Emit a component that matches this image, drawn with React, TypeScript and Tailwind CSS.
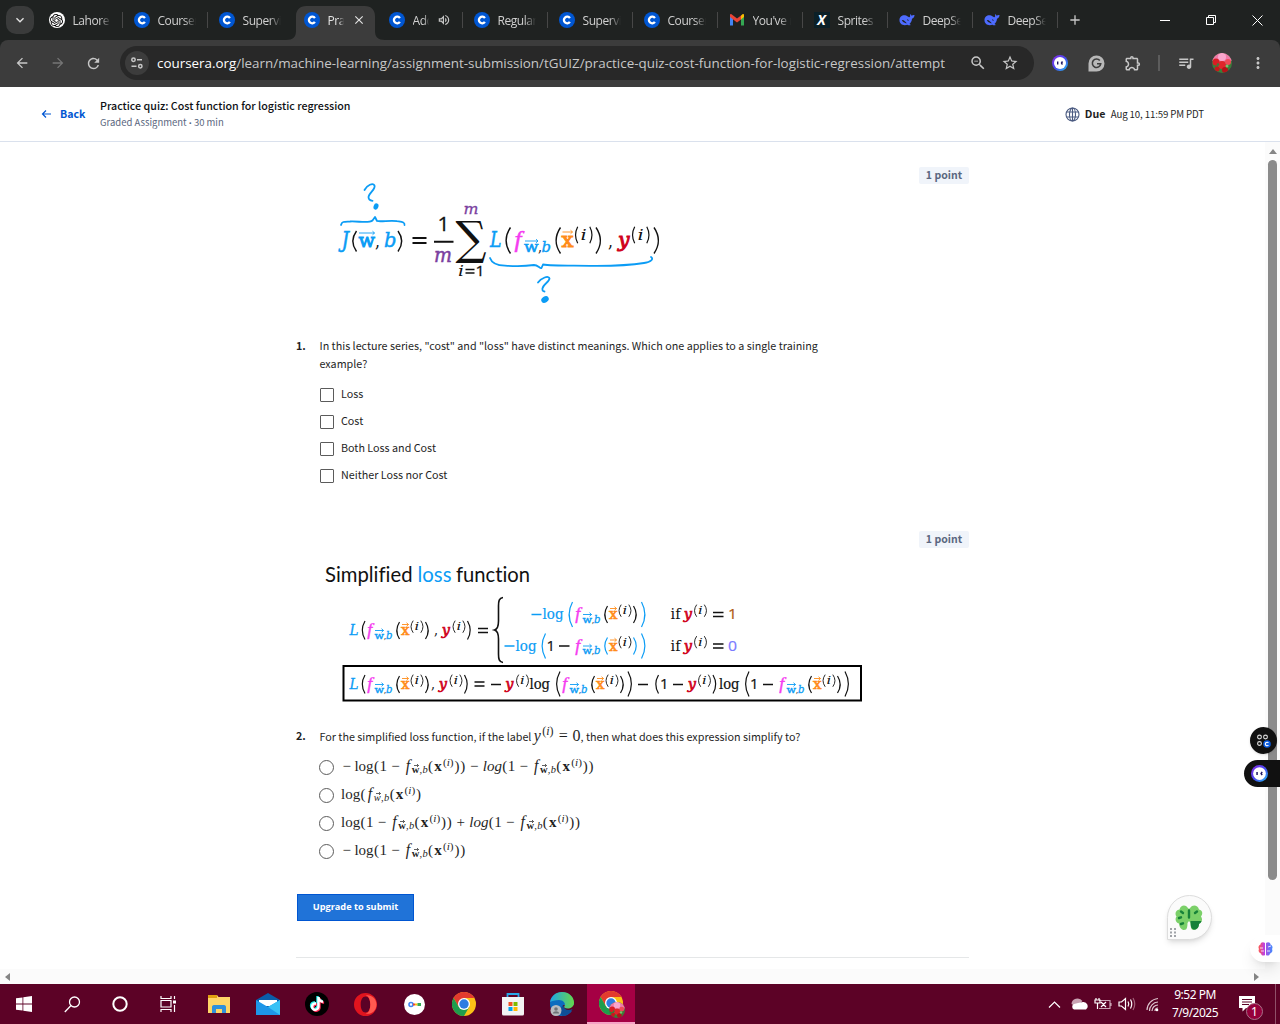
import React from "react";
import { MdArrowBack, MdArrowForward, MdRefresh, MdZoomOut, MdStarBorder, MdOutlineExtension, MdQueueMusic, MdMoreVert, MdKeyboardArrowDown, MdClose, MdAdd, MdOutlineVolumeUp } from "react-icons/md";
import { SiOpenai, SiTiktok } from "react-icons/si";

const BLUE = "#0b9cf5";
const PINK = "#f53cf0";
const ORANGE = "#ff8c1a";
const RED = "#d0021b";
const PURPLE = "#7b3fa0";

/* ---------- formula artwork ---------- */

type TokProps = { t: string; x: number; w: number; y: number; s: number; c?: string; i?: boolean; b?: boolean; sans?: boolean; thin?: boolean; k?: number };

function Tok({ t, x, w, y, s, c = "#111", i, b, sans, thin, k = 0 }: TokProps) {
  return (
    <text x={x} y={y} fontSize={s} fill={c} textLength={w} lengthAdjust="spacingAndGlyphs"
      stroke={k ? c : "none"} strokeWidth={k}
      fontStyle={i ? "italic" : "normal"} fontWeight={b ? 700 : 400}
      fontFamily={sans ? '"Open Sans", sans-serif' : thin ? '"Liberation Serif", serif' : '"DejaVu Serif", serif'}>{t}</text>
  );
}

function Paren({ x, y, h, c = "#111", close, w = 5, k = 1.2 }: { x: number; y: number; h: number; c?: string; close?: boolean; w?: number; k?: number }) {
  const a = close ? x : x + w;
  const m = close ? x + w * 1.35 : x - w * 0.35;
  return <path d={`M${a} ${y}Q${m} ${y + h / 2} ${a} ${y + h}`} fill="none" stroke={c} strokeWidth={k} />;
}

function Vec({ x, w, y, c }: { x: number; w: number; y: number; c: string }) {
  return <path d={`M${x} ${y}h${w}m-2 -1.800l2 1.800l-2 1.800`} fill="none" stroke={c} strokeWidth="0.9" />;
}

function SupI({ x, y, w = 14, s = 11 }: { x: number; y: number; w?: number; s?: number }) {
  return (
    <g>
      <Paren x={x} y={y - s * 0.85} h={s * 1.1} w={3.2} k={s > 12 ? 1.2 : 0.9} />
      <Tok t="i" x={x + w * 0.32} w={w * 0.34} y={y} s={s} i />
      <Paren x={x + w - 3.2} y={y - s * 0.85} h={s * 1.1} w={3.2} k={s > 12 ? 1.2 : 0.9} close />
    </g>
  );
}

function Fx({ x, y, pc }: { x: number; y: number; pc?: string }) {
  return (
    <g>
      <Tok t="f" x={x + 1.8} w={5} y={y} s={17} c={PINK} i thin k={0.4} />
      <Vec x={x + 9.5} w={8.5} y={y - 4.5} c={BLUE} />
      <Tok t="w" x={x + 9} w={9.5} y={y + 3.5} s={10} c={BLUE} k={0.4} />
      <Tok t="," x={x + 18.3} w={2.5} y={y + 3.5} s={10} />
      <Tok t="b" x={x + 20.5} w={6.5} y={y + 3.5} s={11} c={BLUE} i k={0.3} />
      <Paren x={x + 30} y={y - 13} h={17} c={pc} w={4} />
      <Vec x={x + 36.5} w={6.5} y={y - 10.5} c={ORANGE} />
      <Tok t="x" x={x + 35.5} w={8.5} y={y} s={14} c={ORANGE} k={0.6} />
      <SupI x={x + 44.5} y={y - 5} />
      <Paren x={x + 60} y={y - 13} h={17} c={pc} w={4} close />
    </g>
  );
}

function CostArt() {
  return (
    <svg className="block" width="360" height="150" viewBox="320 165 360 150">
      <g fill="none" stroke={BLUE} strokeWidth="1.8" strokeLinecap="round" strokeLinejoin="round">
        <path d="M364.500 190C367 185 373 182.500 374.500 185.500C376 189 369 193 368.500 197C368.500 199 370 200.500 372.500 200.800" />
        <path d="M341 225C342 221 345 221.700 350 221.500C358 221 369 223.500 372.500 220.500L375 217L377 221C381 222 391 220 397 221.200C402 222 405 222 404.500 225" />
        <path d="M490 258C492 264 498 265.500 505 265.600C517 266.500 527 266 534 265C538 265 540 269 541.500 268L543 264.500C552 266 570 265.500 590 265.800C612 266 632 265 644 263C651 262 654 259 651 257" />
        <path d="M538 282.500C541 278 549 275 549.500 278.500C549.500 282 543 284 542.500 288.500C542 291 543.500 291.500 544.500 291.500" />
      </g>
      <ellipse cx="376" cy="206.500" rx="2.400" ry="3.200" fill={BLUE} transform="rotate(20 376 206.500)" />
      <ellipse cx="545" cy="299.500" rx="4" ry="3" fill={BLUE} transform="rotate(-35 545 299.500)" />
      <Tok t="J" x={341.5} w={7.5} y={247} s={22} c={BLUE} i k={0.5} />
      <Paren x={351} y={231} h={20.5} w={5.5} k={1.4} />
      <Vec x={359} w={15.5} y={233} c={BLUE} />
      <Tok t="w" x={358.5} w={16.5} y={247} s={18.5} c={BLUE} k={0.9} />
      <Tok t="," x={375} w={5} y={247} s={18} />
      <Tok t="b" x={384} w={12.5} y={247} s={21} c={BLUE} i k={0.5} />
      <Paren x={398} y={231} h={20.5} w={5.5} close k={1.4} />
      <path d="M412.500 238h14M412.500 243h14M434 241.700h19.500" stroke="#111" strokeWidth="1.900" />
      <Tok t="1" x={437.5} w={12} y={231} s={20} sans k={0.3} />
      <Tok t="m" x={434} w={18} y={262} s={20} c={PURPLE} i k={0.5} />
      <Tok t="m" x={463.5} w={15} y={214} s={15} c={PURPLE} i k={0.3} />
      <Tok t="∑" x={455.5} w={31} y={253.5} s={46} />
      <Tok t="i" x={458} w={6} y={276} s={15} i />
      <path d="M465.500 269.500h9M465.500 273h9" stroke="#111" strokeWidth="1.400" />
      <Tok t="1" x={475.500} w={9} y={276} s={15} sans k={0.3} />
      <Tok t="L" x={490} w={11.5} y={247} s={21.5} c={BLUE} i k={0.5} />
      <Paren x={504} y={227.5} h={26} w={6.5} k={1.4} />
      <Tok t="f" x={514.500} w={7} y={247} s={24} c={PINK} i thin k={0.5} />
      <Vec x={525} w={13} y={241} c={BLUE} />
      <Tok t="w" x={524} w={14.5} y={251.5} s={14.5} c={BLUE} k={0.6} />
      <Tok t="," x={538} w={4} y={251.5} s={14} />
      <Tok t="b" x={541.500} w={9.5} y={251.5} s={15} c={BLUE} i k={0.4} />
      <Paren x={554} y={227.5} h={26} w={6.5} k={1.4} />
      <Vec x={562.5} w={10} y={232} c={ORANGE} />
      <Tok t="x" x={561.500} w={12} y={247} s={20} c={ORANGE} k={1} />
      <SupI x={574.5} y={239.5} w={18.5} s={15} />
      <Paren x={596} y={227.5} h={26} w={6.5} close k={1.4} />
      <Tok t="," x={608} w={5} y={247} s={19} />
      <Tok t="y" x={618} w={11.5} y={247} s={20} c={RED} i k={1} />
      <SupI x={631.5} y={239.5} w={18.5} s={15} />
      <Paren x={654} y={227.5} h={26} w={6.5} close k={1.4} />
    </svg>
  );
}

const RedY = ({ x, y }: { x: number; y: number }) => <Tok t="y" x={x + 0.8} w={8.2} y={y} s={14} c={RED} i k={0.7} />;

function LossHead({ y, tight }: { y: number; tight?: boolean }) {
  const d = tight ? -3 : 0;
  return (
    <g>
      <Tok t="L" x={349.5} w={9} y={y} s={15.5} c={BLUE} i k={0.3} />
      <Paren x={361} y={y - 14} h={18.5} w={4} />
      <Fx x={365.5} y={y} />
      <Tok t="," x={434 + d} w={4} y={y} s={14} />
      <RedY x={441 + d} y={y} />
      <SupI x={452 + d} y={y - 5} />
      <Paren x={467.5 + d} y={y - 14} h={18.5} w={4} close />
    </g>
  );
}

function LossArt() {
  return (
    <svg className="block" width="560" height="146" viewBox="320 560 560 146">
      <g fontFamily="Lato, sans-serif" fontSize="20.500" fill="#111" className="[font-variant-ligatures:none]">
        <text x="325" y="582" textLength="87.500" lengthAdjust="spacingAndGlyphs">Simplified</text>
        <text x="417.500" y="582" textLength="34" lengthAdjust="spacingAndGlyphs" fill={BLUE}>loss</text>
        <text x="456" y="582" textLength="74" lengthAdjust="spacingAndGlyphs">function</text>
      </g>
      <LossHead y={635} />
      <path d="M478 628.500h10M478 632.500h10M713 612.500h10.500M713 616.500h10.500M713 644h10.500M713 648h10.500M559 646h10.500M474.500 682h10M474.500 686h10M491 684.500h10M638 684.500h10M673 684.500h10M763 684.500h10" stroke="#111" strokeWidth="1.300" />
      <path d="M503 597.500C499 598 498.500 601 498.500 606V621C498.500 626 498 629 494.500 630C498 631 498.500 634 498.500 639V654C498.500 659 499 662 503 662.500" fill="none" stroke="#111" strokeWidth="1.600" />
      <path d="M531.500 614.500h10M504.500 646h10" stroke={BLUE} strokeWidth="1.400" />
      <Tok t="log" x={542.5} w={21} y={619} s={14.5} c={BLUE} k={0.2} />
      <Paren x={567.5} y={602} h={25} c={BLUE} />
      <Fx x={573.5} y={619} />
      <Paren x={641.5} y={602} h={25} c={BLUE} close />
      <Tok t="log" x={515.5} w={21} y={650.5} s={14.5} c={BLUE} k={0.2} />
      <Paren x={540.5} y={633.5} h={25} c={BLUE} />
      <Tok t="1" x={546.5} w={8.5} y={650.5} s={14.5} sans k={0.2} />
      <Fx x={573.5} y={650.5} pc={BLUE} />
      <Paren x={641.5} y={633.5} h={25} c={BLUE} close />
      {[619, 650.5].map((y, n) => (
        <g key={y}>
          <Tok t="if" x={670.5} w={10} y={y} s={14.5} />
          <RedY x={683} y={y} />
          <SupI x={693.5} y={y - 5} />
          <Tok t={n ? "0" : "1"} x={728} w={9} y={y} s={14.5} c={n ? "#7b7bff" : "#b05a14"} sans k={0.2} />
        </g>
      ))}
      <rect x="343.500" y="666" width="517.500" height="34.500" fill="none" stroke="#000" strokeWidth="2" />
      <LossHead y={689} tight />
      <RedY x={504.5} y={689} />
      <SupI x={515.5} y={684} />
      <Tok t="log" x={529.5} w={20.5} y={689} s={14.5} k={0.2} />
      <Paren x={555} y={671.5} h={25} />
      <Fx x={560.5} y={689} />
      <Paren x={628} y={671.5} h={25} close />
      <Paren x={654.5} y={675} h={18.5} w={4} />
      <Tok t="1" x={660} w={8.5} y={689} s={14.5} sans k={0.2} />
      <RedY x={687} y={689} />
      <SupI x={697.5} y={684} />
      <Paren x={713} y={675} h={18.5} w={4} close />
      <Tok t="log" x={719} w={20.5} y={689} s={14.5} k={0.2} />
      <Paren x={744} y={671.5} h={25} />
      <Tok t="1" x={750} w={8.5} y={689} s={14.5} sans k={0.2} />
      <Fx x={777.5} y={689} />
      <Paren x={845} y={671.5} h={25} close />
    </svg>
  );
}

/* ---------- typeset maths in the answers ---------- */

const P = ({ c }: { c: string }) => <span className="inline-block w-[0.389em] text-center">{c}</span>;
const Op = ({ c, lead }: { c: string; lead?: boolean }) => (
  <span className={lead ? "mr-[0.12em] inline-block w-[0.778em] text-center" : "mx-[0.18em] inline-block w-[0.778em] text-center"}>{c}</span>
);
const Sup = () => (
  <span className="relative -top-[0.48em] inline-block w-[1.02em] text-center text-[0.75em] leading-none">(<i>i</i>)</span>
);

function FMath({ thin }: { thin?: boolean }) {
  return (
    <>
      <i className="inline-block w-[0.49em] text-center text-[1.05em]">f</i>
      <span className="relative top-[0.22em] inline-flex text-[0.7em] leading-none">
        <span className={thin ? "relative w-[0.7em] italic" : "relative w-[0.74em] font-bold"}>
          w
          <svg className="absolute -top-px left-[2px]" width="5" height="3" viewBox="0 0 5 3"><path d="M0 1.500h4.500M3 0l1.500 1.500L3 3" stroke="#1f1f1f" strokeWidth=".7" fill="none" /></svg>
        </span>
        <span className="w-[0.28em]">,</span><i>b</i>
      </span>
      <P c="(" /><b className="inline-block w-[0.607em] text-center">x</b>
      <Sup /><P c=")" />
    </>
  );
}
const OneMinus = () => (<><P c="(" /><span>1</span><Op c="−" /></>);

function MathLine({ children }: { children: React.ReactNode }) {
  return (
    <label className="flex h-7 items-center">
      <span className="size-[15px] shrink-0 rounded-full border-[1.5px] border-[#5b5b5b]" />
      <span className="mb-0.5 ml-[7px] whitespace-nowrap font-['Liberation_Serif',serif] text-[15px] leading-[26px] text-[#1f1f1f]">{children}</span>
    </label>
  );
}

/* ---------- browser chrome ---------- */

const CourseraIcon = () => (
  <svg width="16" height="16" viewBox="0 0 16 16">
    <circle cx="8" cy="8" r="8" fill="#0056d2" />
    <path d="M10.900 6.100A3.300 3.300 0 1 0 10.900 9.900" fill="none" stroke="#fff" strokeWidth="2.300" />
  </svg>
);
const OpenAiIcon = () => <span className="flex size-4 items-center justify-center rounded-full bg-white text-[13px] text-black"><SiOpenai /></span>;
const GmailIcon = () => (
  <svg width="16" height="16" viewBox="0 0 16 16">
    <path d="M1 4v9.500h3V6.500z" fill="#4285f4" /><path d="M15 4v9.500h-3V6.500z" fill="#34a853" />
    <path d="M12 3.500l1.500-1.200c.8-.5 1.500 0 1.500 1V5l-3 2.500z" fill="#fbbc04" />
    <path d="M1 5V3.300c0-1 .7-1.500 1.500-1L8 6.500l4-3V7.500L8 10.500z" fill="#ea4335" />
  </svg>
);
const XIcon = () => <span className="flex size-4 items-center justify-center bg-[#0b2027] font-['Open_Sans',sans-serif] text-[14px] leading-none font-bold text-white italic">X</span>;
const WhaleIcon = () => (
  <svg width="17" height="16" viewBox="0 0 17 16">
    <path d="M.5 8C.5 4.500 3.500 2.500 6.500 3c1.500.2 2.500 1 3.800 1.800C11 5.300 12 5 11.800 3.500c-.1-1 0-1.500.3-1.500.6.200.8 1.100 1.300 1.400.9-.2 1.700-.9 3.100-.6-.2 2.200-1.200 3.600-2.700 3.900-.2 2.500-1.200 4.300-2.700 5.600.8.500 1.300.6 1.300.9-1 .7-2.500.3-3.400-.2C4.500 14.500.5 12.500.5 8z" fill="#4d6bfe" />
    <path d="M3 8c2.500-.2 4 2 5.300 3.500-2 0-2.700-1.400-3.500-1.100C4 9.800 3.300 9 3 8zM8.500 7.200c1-.2 1.600.8 1.900 1.700-.9.200-1.600-.7-1.900-1.700z" fill="#1f2221" />
  </svg>
);

const tabs: { icon: React.ReactNode; title: string; kind?: "active" | "audio"; sep?: boolean }[] = [
  { icon: <OpenAiIcon />, title: "Lahore", sep: true },
  { icon: <CourseraIcon />, title: "Courser", sep: true },
  { icon: <CourseraIcon />, title: "Supervis" },
  { icon: <CourseraIcon />, title: "Prac", kind: "active" },
  { icon: <CourseraIcon />, title: "Add", kind: "audio", sep: true },
  { icon: <CourseraIcon />, title: "Regular", sep: true },
  { icon: <CourseraIcon />, title: "Supervis", sep: true },
  { icon: <CourseraIcon />, title: "Courser", sep: true },
  { icon: <GmailIcon />, title: "You've r", sep: true },
  { icon: <XIcon />, title: "Sprites", sep: true },
  { icon: <WhaleIcon />, title: "DeepSee", sep: true },
  { icon: <WhaleIcon />, title: "DeepSee", sep: true },
];

function Tab({ icon, title, kind, sep }: (typeof tabs)[number]) {
  const active = kind === "active";
  return (
    <div className="relative flex h-10 w-[85px] shrink-0 items-center pl-[10.5px]">
      {active && (
        <svg className="absolute top-1.5 left-[-7px]" width="99" height="34" viewBox="0 0 99 34">
          <path d="M0 34C7 34 10 31 10 25V10C10 4 14 0 20 0H79C85 0 89 4 89 10V25C89 31 92 34 99 34z" fill="#3c3c3c" />
        </svg>
      )}
      <span className="relative flex w-4 shrink-0">{icon}</span>
      <span className={"relative mt-px ml-[8px] overflow-hidden whitespace-nowrap text-[12px] tracking-[-0.45px] [mask-image:linear-gradient(to_right,black_70%,transparent)] " + (kind ? "w-[16px] " : "w-[38px] ") + (active ? "text-[#e3e3e3]" : "text-[#d0d0d0]")}>{title}</span>
      {active && <MdClose className="relative ml-[8px] text-[14px] text-[#e3e3e3]" />}
      {kind === "audio" && <MdOutlineVolumeUp className="relative ml-[8px] text-[14px] text-[#c7c7c7]" />}
      {sep && <span className="absolute right-0 h-4 w-[1.5px] bg-[#474747]" />}
    </div>
  );
}

const Rose = ({ s }: { s: number }) => (
  <svg width={s} height={s} viewBox="0 0 20 20">
    <clipPath id="rose"><circle cx="10" cy="10" r="10" /></clipPath>
    <g clipPath="url(#rose)">
      <rect width="20" height="20" fill="#3b7d3a" />
      <path d="M0 0h20v8L10 9 0 8z" fill="#f07aa8" /><circle cx="10" cy="4" r="4" fill="#f9a6cc" />
      <circle cx="4" cy="9" r="3.500" fill="#d81e24" /><circle cx="10" cy="12" r="4" fill="#e0262b" />
      <circle cx="16" cy="9" r="3" fill="#f04a58" /><circle cx="13" cy="17" r="3" fill="#b51218" /><circle cx="5" cy="16" r="2.500" fill="#c8171c" />
      <circle cx="15" cy="13" r="1.500" fill="#79c46a" /><circle cx="6" cy="11.500" r="1.200" fill="#3b7d3a" />
    </g>
  </svg>
);

const Bot = ({ s }: { s: number }) => (
  <svg width={s} height={s} viewBox="0 0 16 16">
    <defs><linearGradient id="bot" x1="0" y1="0" x2="1" y2="1"><stop stopColor="#8a2be2" /><stop offset=".5" stopColor="#4a48f0" /><stop offset="1" stopColor="#20c4f4" /></linearGradient></defs>
    <circle cx="8" cy="8" r="8" fill="url(#bot)" /><circle cx="8" cy="8" r="6" fill="#fff" />
    <path d="M5.700 6.500v3M10.500 6.500L9.500 8l1 1.500" stroke="#1b1464" strokeWidth="1.400" fill="none" />
  </svg>
);

function BrowserTop() {
  return (
    <header className="bg-[#1f2221] font-['Open_Sans',sans-serif]">
      <div className="flex h-10 items-center">
        <span className="ml-1.5 flex size-7 items-center justify-center rounded-[10px] bg-[#3a3b3b] text-[16px] text-[#e3e3e3]"><MdKeyboardArrowDown /></span>
        <div className="ml-1 flex">{tabs.map((t, i) => <Tab key={i} {...t} />)}</div>
        <MdAdd className="ml-[9px] text-[16px] text-[#c7c7c7]" />
        <svg className="ml-auto" width="120" height="40" viewBox="1160 0 120 40" fill="none" stroke="#fff" strokeWidth="1">
          <path d="M1160 20.500h10M1206.500 17.500h7v7h-7zM1208.500 17.500v-2h7v7h-2M1252.500 15.500l10 10M1262.500 15.500l-10 10" />
        </svg>
      </div>
      <div className="flex h-[47px] items-center rounded-t-lg bg-[#3c3c3c] pb-px text-[#c7c7c7]">
        <MdArrowBack className="ml-[14px] text-[16px]" />
        <MdArrowForward className="ml-5 text-[16px] text-[#757575]" />
        <MdRefresh className="ml-[19px] text-[17px]" />
        <div className="ml-[18px] flex h-[34px] w-[914px] items-center rounded-full bg-[#282828]">
          <span className="ml-[5px] flex size-6 items-center justify-center rounded-full bg-[#3c3c3c]">
            <svg width="14" height="14" viewBox="0 0 14 14" fill="none" stroke="#c7c7c7" strokeWidth="1.500"><circle cx="3.500" cy="3.800" r="1.700" /><path d="M7 3.800h5M1.500 10.200h5" /><circle cx="10.300" cy="10.200" r="1.700" /></svg>
          </span>
          <span className="ml-2 w-[790px] whitespace-nowrap text-[13.4px] text-[#c7c7c7]"><span className="text-white">coursera.org</span>/learn/machine-learning/assignment-submission/tGUIZ/practice-quiz-cost-function-for-logistic-regression/attempt</span>
          <MdZoomOut className="ml-[22px] shrink-0 text-[18px]" />
          <MdStarBorder className="ml-[14px] shrink-0 text-[18px]" />
        </div>
        <span className="ml-[18px]"><Bot s={16} /></span>
        <svg className="ml-[20px]" width="17" height="17" viewBox="0 0 17 17"><path d="M8.500 .5a8 8 0 0 1 0 16H.5v-8a8 8 0 0 1 8-8z" fill="#b8b8b8" /><path d="M11.800 5.600A4.200 4.200 0 1 0 12.700 8.800H9" fill="none" stroke="#3c3c3c" strokeWidth="1.600" /></svg>
        <MdOutlineExtension className="ml-[19px] text-[18px]" />
        <span className="ml-[16px] h-4 w-[1.5px] bg-[#5c5c5c]" />
        <MdQueueMusic className="ml-[17px] text-[18px]" />
        <span className="ml-[17px]"><Rose s={20} /></span>
        <MdMoreVert className="ml-[17px] text-[18px]" />
      </div>
    </header>
  );
}

/* ---------- quiz page ---------- */

const PointBadge = () => <div className="ml-auto flex h-[17px] w-[50px] items-center justify-center rounded-[2px] bg-[#f0f4fa] pb-px text-[10.5px] font-bold text-[#5b6780]">1 point</div>;

function QuizHeader() {
  return (
    <div className="flex h-[55px] shrink-0 items-center border-b border-[#dae1ed] bg-white">
      <svg className="ml-[41px]" width="11" height="10" viewBox="0 0 11 10" fill="none" stroke="#0056d2" strokeWidth="1.200"><path d="M10 5H1.500M5 1.500L1.500 5 5 8.500" /></svg>
      <span className="ml-2 w-10 pb-px text-[10.6px] font-bold text-[#0056d2]">Back</span>
      <div className="pb-px leading-[15px]">
        <div className="text-[10.7px] font-medium text-[#0f1114]">Practice quiz: Cost function for logistic regression</div>
        <div className="pt-0.5 text-[9.5px] leading-[14px] text-[#5b6780]">Graded Assignment <span className="font-['Open_Sans',sans-serif] text-[8px]">•</span> 30 min</div>
      </div>
      <svg className="ml-auto" width="15" height="15" viewBox="0 0 15 15" fill="none" stroke="#4a5a80" strokeWidth="1.100"><circle cx="7.500" cy="7.500" r="6.500" /><ellipse cx="7.500" cy="7.500" rx="3" ry="6.500" /><path d="M7.500 1v13M1.600 5h11.800M1.600 10h11.800" /></svg>
      <span className="ml-[5px] w-[26px] text-[10.7px] font-bold text-[#1f1f1f]">Due</span>
      <span className="mr-[76px] text-[9.7px] tracking-[-0.13px] text-[#1f1f1f]">Aug 10, 11:59 PM PDT</span>
    </div>
  );
}

function Quiz() {
  return (
    <main className="ml-[296px] w-[673px] text-[10.75px] text-[#1f1f1f]">
      <div className="flex h-[187px] items-start pt-[23px]">
        <div className="ml-6"><CostArt /></div>
        <div className="mt-0.5 ml-auto"><PointBadge /></div>
      </div>
      <div className="flex pt-2 leading-[18px]">
        <b className="w-[23.5px]">1.</b>
        <p className="w-[520px]">In this lecture series, "cost" and "loss" have distinct meanings. Which one applies to a single training<br />example?</p>
      </div>
      <div className="mt-[8px] ml-6">
        {["Loss", "Cost", "Both Loss and Cost", "Neither Loss nor Cost"].map((o) => (
          <label key={o} className="flex h-[27px] items-center">
            <span className="mt-px size-[13.5px] rounded-[1px] border-[1.5px] border-[#5b5b5b]" />
            <span className="ml-[7.5px]">{o}</span>
          </label>
        ))}
      </div>
      <div className="mt-[42px]"><PointBadge /></div>
      <div className="mt-[12px] ml-6"><LossArt /></div>
      <div className="mt-[16px] flex h-[28px] items-center">
        <b className="w-[23.5px]">2.</b>
        <p className="mb-px whitespace-nowrap">For the simplified loss function, if the label <span className="font-['Liberation_Serif',serif] text-[16px]"><i className="inline-block w-[0.5em]">y</i><Sup /><span className="mx-[0.19em] inline-block w-[0.778em] text-center">=</span>0</span>, then what does this expression simplify to?</p>
      </div>
      <div className="mt-[3px] ml-[23px]">
        <MathLine><Op c="−" lead />log<OneMinus /><FMath /><P c=")" /><Op c="−" /><i>log</i><OneMinus /><FMath /><P c=")" /></MathLine>
        <MathLine>log<P c="(" /><FMath thin /></MathLine>
        <MathLine>log<OneMinus /><FMath /><P c=")" /><Op c="+" /><i>log</i><OneMinus /><FMath /><P c=")" /></MathLine>
        <MathLine><Op c="−" lead />log<OneMinus /><FMath /><P c=")" /></MathLine>
      </div>
      <button className="mt-[29px] ml-px block h-[27px] w-[117px] border border-[#0056d2] bg-[#2073d8] pb-0.5 font-['Open_Sans',sans-serif] text-[9.2px] font-bold text-white">Upgrade to submit</button>
      <div className="mt-9 border-t border-[#e5e7e8]" />
    </main>
  );
}

function Floaters() {
  return (
    <>
      <span className="absolute top-[727px] left-[1250px] flex size-[27px] items-center justify-center rounded-full bg-[#111] shadow">
        <svg width="15" height="15" viewBox="0 0 15 15" fill="none" stroke="#ddd" strokeWidth="1.100"><circle cx="3.500" cy="4" r="1.900" /><circle cx="9.500" cy="4" r="1.900" /><circle cx="3.500" cy="10.500" r="1.900" /><circle cx="11" cy="11" r="3.800" fill="#0a5ce0" stroke="none" /><path d="M12.400 10A1.700 1.700 0 1 0 12.400 12" stroke="#fff" strokeWidth="1.100" /></svg>
      </span>
      <span className="absolute top-[760px] left-[1244px] flex h-[27px] w-9 items-center rounded-l-full bg-[#111] pl-[7px]"><Bot s={17} /></span>
      <span className="absolute top-[895px] left-[1167px] flex size-[45px] items-center justify-center rounded-full rounded-bl-none border border-[#ddd] bg-[#fbfbfb] shadow-md">
        <svg className="mr-0.5" width="28" height="25" viewBox="0 0 28 25">
          <path d="M12.500 2.500C11-.5 5.500-.5 4.500 4.500 .5 5 -.5 9 1.500 11.500 -.5 14 1 18 4 18.500 4.500 24 8 26 11 24.500c1-1 1.500-3 1.500-6.500L14 16l1.500 2c0 3.500 .5 5.500 1.500 6.500 3 1.500 7-.5 7-6 3-1 4-4.500 2-7C28.500 8 27 5 24 4.500 23-.5 17-.5 15.500 2.500L14 4z" fill="#7bd069" />
          <path d="M15.500 16H26.500c-.5 1.500-1.500 2.500-2.500 3 0 5-4.500 6.500-6.500 5-1.500-1-2-4-2-8z" fill="#178239" />
          <path d="M14 5.500v7M6 6.500l2 1.500M22 6.500l-2 1.500M4 13l2-.7M6 19l2-.7" stroke="#178239" strokeWidth="2.400" strokeLinecap="round" />
        </svg>
        <svg className="absolute bottom-[2px] left-[2px]" width="6" height="9" viewBox="0 0 6 9" fill="#a0a3a8"><path d="M0 0h2v2H0zM4 0h2v2H4zM0 3.500h2v2H0zM4 3.500h2v2H4zM0 7h2v2H0zM4 7h2v2H4z" /></svg>
      </span>
      <span className="absolute top-[935px] left-[1250px] flex h-[27px] w-[30px] items-center rounded-l-full bg-white pl-2 shadow-lg">
        <svg width="15" height="14" viewBox="0 0 15 14"><defs><linearGradient id="br"><stop stopColor="#ff5a4f" /><stop offset=".4" stopColor="#c13fe0" /><stop offset="1" stopColor="#3f8cff" /></linearGradient></defs><path d="M7 1C5-.5 2.500.5 2.500 2.500 .5 3.500 0 5.500 1 7c-1 2 0 4 2 4.500C3.500 14 6 14 7 13zM8 1c2-1.500 4.500-.5 4.500 1.500C14.500 3.500 15 5.500 14 7c1 2 0 4-2 4.500C11.500 14 9 14 8 13z" fill="url(#br)" /><path d="M2 6h3M3 9h3M10 5l3-1M9 9h3" stroke="#fff" strokeWidth=".8" /></svg>
      </span>
    </>
  );
}

/* ---------- taskbar ---------- */

const Chrome = () => (
  <svg width="24" height="24" viewBox="0 0 24 24">
    <circle cx="12" cy="12" r="12" fill="#fbc116" />
    <path d="M12 6h10.400A12 12 0 0 0 1.600 6l5.200 9z" fill="#e33b2e" />
    <path d="M1.600 6A12 12 0 0 0 12 24l5.200-9L12 12 6.800 15z" fill="#1f9d4d" />
    <circle cx="12" cy="12" r="6" fill="#fff" /><circle cx="12" cy="12" r="4.700" fill="#2f7de1" />
  </svg>
);

function Taskbar() {
  const cell = "flex h-10 w-[49px] shrink-0 items-center justify-center";
  return (
    <footer className="flex h-10 items-center bg-[#5c0226] font-['Noto_Sans',sans-serif] text-white">
      <span className="flex w-12 justify-center"><svg width="16" height="16" viewBox="0 0 16 16" fill="#fff"><path d="M0 2.300l6.500-.9v6.200H0zM7.300 1.300L16 0v7.600H7.300zM0 8.400h6.500v6.200L0 13.700zM7.300 8.400H16V16l-8.700-1.300z" /></svg></span>
      <span className="flex w-12 justify-center"><svg width="17" height="17" viewBox="0 0 17 17" fill="none" stroke="#fff" strokeWidth="1.300"><circle cx="10.500" cy="6" r="5" /><path d="M7 9.500L.8 16" /></svg></span>
      <span className="flex w-12 justify-center"><svg width="16" height="16" viewBox="0 0 16 16" fill="none" stroke="#fff" strokeWidth="2"><circle cx="8" cy="8" r="6.700" /></svg></span>
      <span className="flex w-12 justify-center"><svg width="17" height="16" viewBox="0 0 17 16" fill="none" stroke="#fff" strokeWidth="1.200"><path d="M1 0v2.500h10V0M1 16v-2.500h10V16M1 4.500h10v6.500H1zM14.500 0v3M14.500 9v7" /><path d="M13 4.500h3v3h-3z" fill="#fff" stroke="none" /></svg></span>
      <div className="ml-[2px] mr-px flex">
        <span className={cell}><svg width="22" height="19" viewBox="0 0 22 19"><path d="M0 0h9l1.500 2H22v16H0z" fill="#ffd567" /><path d="M0 0h9v3H0z" fill="#e0a010" /><path d="M4 18v-6c0-1 .5-2 2-2h10c1.500 0 2 1 2 2v6h-4v-4H8v4z" fill="#2f90dc" /></svg></span>
        <span className={cell}><svg width="24" height="22" viewBox="0 0 24 22"><path d="M0 7L12 0l12 7v15H0z" fill="#0a5ca8" /><path d="M3 7h18v6H3z" fill="#fff" /><path d="M0 7l12 7 12-7v15H0z" fill="#1e96e8" /><path d="M12 14l12-7v15z" fill="#38c1f5" /></svg></span>
        <span className={cell}><span className="flex size-6 items-center justify-center rounded-full bg-black text-[14px]"><SiTiktok className="[filter:drop-shadow(1px_1px_0_#fe2c55)_drop-shadow(-1px_-0.5px_0_#25f4ee)]" /></span></span>
        <span className={cell}><svg width="23" height="23" viewBox="0 0 23 23"><path fillRule="evenodd" d="M11.500 0a11.500 11.500 0 1 0 0 23 11.500 11.500 0 0 0 0-23zm0 3.500c3 0 4.800 3.500 4.800 8s-1.800 8-4.800 8-4.800-3.500-4.800-8 1.800-8 4.800-8z" fill="#e0141e" /><path d="M11.500 2.500c4.500-1.500 11 2 11 9s-6.500 10.500-11 9c3 0 4.800-4 4.800-9s-1.800-9-4.800-9z" fill="#ff5a50" /></svg></span>
        <span className={cell}><svg width="21" height="21" viewBox="0 0 21 21"><circle cx="10.500" cy="10.500" r="10.500" fill="#fff" /><circle cx="7" cy="10.500" r="2" fill="none" stroke="#4285f4" strokeWidth="1.600" /><path d="M9 10.500h2" stroke="#ea4335" strokeWidth="2" /><path d="M11 10.500h2.500" stroke="#fbbc04" strokeWidth="2" /><path d="M13.500 10.500h3.500" stroke="#34a853" strokeWidth="3" /></svg></span>
        <span className={cell}><Chrome /></span>
        <span className={cell}><svg width="24" height="24" viewBox="0 0 24 24"><path d="M6.500 6V2h11v4" fill="none" stroke="#29a8e8" strokeWidth="1.800" /><path d="M1 5h22v17a1.500 1.500 0 0 1-1.500 1.500h-19A1.500 1.500 0 0 1 1 22z" fill="#f3f3f3" /><path d="M7.500 10h4v4h-4z" fill="#f25022" /><path d="M12.500 10h4v4h-4z" fill="#7fba00" /><path d="M7.500 15h4v4h-4z" fill="#00a4ef" /><path d="M12.500 15h4v4h-4z" fill="#ffb900" /></svg></span>
        <span className={cell}><svg width="24" height="24" viewBox="0 0 24 24"><defs><linearGradient id="edge"><stop stopColor="#1fa5e8" /><stop offset="1" stopColor="#66d84a" /></linearGradient></defs><circle cx="12" cy="12" r="12" fill="#0d6cbf" /><path d="M13 13h12v6H14z" fill="#5c0226" /><path d="M0 10C1 4 6 0 12 0c7 0 12 5 12 10.500 0 4-3 6-6.500 6-3 0-4-1-3-2.500C16 11 13 8 9 8c-4 0-7 1-9 2z" fill="url(#edge)" /><path d="M13 13c1 5 5 6 9.500 4-2 4.500-6 7-10 7-3-2-3-8 .5-11z" fill="#0f4f96" /><circle cx="6" cy="18.500" r="5.500" fill="#b9bcc0" /><circle cx="6" cy="17" r="1.800" fill="#6e7277" /><path d="M2.800 21.500c.5-3 6-3 6.400 0z" fill="#6e7277" /></svg></span>
      </div>
      <span className="relative flex h-10 w-12 items-center justify-center border-b-2 border-[#f5a3c5] bg-[#a50044]"><Chrome /><span className="absolute top-[18px] left-[22px]"><Rose s={16} /></span></span>
      <svg className="ml-auto" width="120" height="40" viewBox="1045 984 120 40" fill="none" stroke="#fff" strokeWidth="1.200">
        <path d="M1049 1007.500l5.500-5.500 5.500 5.500" />
        <path d="M1071.500 1004a6 5.500 0 0 1 11-3l-6 6z" fill="#c9a3b3" stroke="none" />
        <path d="M1074 1009.500a3 3 0 0 1 0-5.500l4-1 5-1a4.200 4.200 0 0 1 3 7.500z" fill="#fff" stroke="none" />
        <path d="M1099 1000.500h11v8h-11M1111 1003v3" stroke="#c9a3b3" /><path d="M1101 1002l5 5M1106 1002l-5 5M1095 1000h5v3h-5zM1096 998v2M1099 998v2M1097.500 1003v6" />
        <path d="M1119 1002h2.500l4-3.500v11l-4-3.500h-2.500zM1128 1001.500q1.500 2.500 0 5M1130.500 999.500q2.500 4.500 0 9" /><path d="M1133 998q3.500 6 0 12" stroke="#a06078" />
        <path d="M1147 1010a12 12 0 0 1 11-11.500M1149.500 1011a9 9 0 0 1 8.500-9M1152 1011a6 6 0 0 1 6-6M1155 1011a3 3 0 0 1 3-3" stroke="#ddc5ce" /><circle cx="1157" cy="1010" r="1.300" fill="#fff" stroke="none" />
      </svg>
      <div className="w-[60px] text-center text-[12px] leading-[18px] tracking-[-0.5px]">9:52 PM<br />7/9/2025</div>
      <svg className="ml-[14px] mr-px" width="40" height="40" viewBox="1239 984 40 40">
        <path d="M1239 996h16v12h-9l-3.500 3.500V1008H1239z" fill="#fff" /><path d="M1242 999.500h10M1242 1002h10M1242 1004.500h7" stroke="#5c0226" />
        <circle cx="1254.500" cy="1011.500" r="8" fill="#96003c" stroke="#a8728a" /><path d="M1275.500 984v40" stroke="#8f5068" />
        <text x="1251" y="1016" fontSize="12" fill="#fff" fontFamily="Noto Sans">1</text>
      </svg>
    </footer>
  );
}

export default function App() {
  return (
    <div className="relative flex h-[1024px] w-[1280px] flex-col overflow-hidden bg-white font-['Noto_Sans_CJK_SC',sans-serif]">
      <BrowserTop />
      <QuizHeader />
      <div className="flex h-[827px]">
        <div className="w-[1265px]"><Quiz /></div>
        <div className="flex w-[15px] flex-col items-center bg-[#fbfbfb]">
          <span className="mt-[7px] size-0 border-x-[4.5px] border-b-[5px] border-x-transparent border-b-[#858585]" />
          <span className="mt-[6px] h-[720px] w-[9px] rounded-full bg-[#8b8b8b]" />
        </div>
      </div>
      <div className="flex h-[15px] items-center bg-[#fbfbfb]">
        <span className="ml-[5px] size-0 border-y-[4.5px] border-r-[5px] border-y-transparent border-r-[#858585]" />
        <span className="mr-[21px] ml-auto size-0 border-y-[4.5px] border-l-[5px] border-y-transparent border-l-[#858585]" />
      </div>
      <Taskbar />
      <Floaters />
    </div>
  );
}
